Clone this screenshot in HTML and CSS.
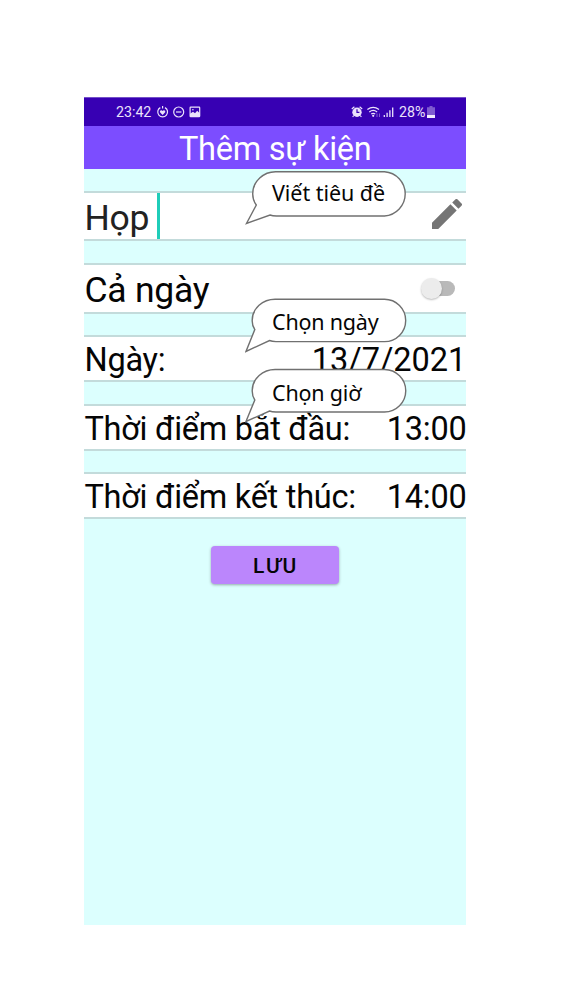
FILE: index.html
```html
<!DOCTYPE html>
<html lang="vi">
<head>
<meta charset="utf-8">
<title>Thêm sự kiện</title>
<link rel="stylesheet" href="styles.css">
</head>
<body>
<main class="phone">
  <div class="status">
    <span class="clock">23:42</span>
    <svg class="status-icons-left" width="46" height="14" viewBox="0 0 46 14" fill="none" stroke="#ebe2fb" stroke-width="1.2">
      <path d="M4.300 2.600A4.900 4.900 0 1 0 9 2.600M6.600 1.100v2.300"/>
      <path d="M6.600 10 4 7.300C3.400 5.400 5.600 4.700 6.600 6c1-1.300 3.200-.6 2.600 1.300Z" fill="#ebe2fb" stroke="none"/>
      <circle cx="22.700" cy="7" r="5"/><path d="M20 7h5.400"/>
      <rect x="34.100" y="2.100" width="9.600" height="9.600" rx=".6"/>
      <path d="M34 11V8.800l3-2 2 1.400 2.200-2.400L44 8.400V11Z" fill="#ebe2fb" stroke="none"/><circle cx="36.900" cy="4.700" r=".8" fill="#ebe2fb" stroke="none"/>
    </svg>
    <svg class="status-icons-right" width="46" height="14" viewBox="0 0 46 14" fill="none" stroke="#ebe2fb" stroke-width="1.2">
      <circle cx="6" cy="7.200" r="4.700" fill="#ebe2fb" stroke="none"/>
      <path d="M.8 4 3.400 1.800M8.600 1.800 11.200 4M2.800 10.500 1.600 12M9.200 10.500l1.200 1.500"/>
      <path d="M6 4.300v3.100h2.400" stroke="#3700b3"/>
      <path d="M16.400 4.600q5.800-4.400 11.600 0M18.300 6.900q3.900-3 7.800 0M20.200 9q2-1.400 4 0"/><circle cx="22.200" cy="10.800" r="1.100" fill="#ebe2fb" stroke="none"/>
      <path d="M26 12V8.500M28.500 8.500V12" stroke="#8b68d5" stroke-width=".9"/>
      <path d="M33.300 12v-2M36.100 12V7.800M38.900 12V5.200M41.700 12V2.400" stroke-width="1.300"/>
    </svg>
    <span class="battery-level">28%</span>
    <svg class="battery" width="8" height="12" viewBox="0 0 8 12"><path d="M2.500 0h3v1.200H8V12H0V1.200h2.500Z" fill="#7f5bd0"/><path d="M0 9h8V12H0Z" fill="#f3edff"/></svg>
  </div>
  <h1 class="title"><span>Thêm sự kiện</span></h1>
  <div class="row row-name">
    <span class="name">Họp</span><i class="caret"></i>
    <svg class="pencil" width="30" height="30" viewBox="3 3 18 18"><path fill="#757575" d="M3 17.250V21h3.750L17.810 9.940l-3.750-3.750L3 17.250zM20.710 7.040a1 1 0 0 0 0-1.410l-2.340-2.340a1 1 0 0 0-1.410 0l-1.830 1.830 3.750 3.750 1.830-1.830z"/></svg>
  </div>
  <div class="row row-allday">
    <span class="allday">Cả ngày</span>
    <span class="switch"><i class="thumb"></i></span>
  </div>
  <div class="row row-date"><span>Ngày:</span><span class="date">13/7/2021</span></div>
  <div class="row row-start"><span>Thời điểm bắt đầu:</span><span>13:00</span></div>
  <div class="row row-end"><span>Thời điểm kết thúc:</span><span>14:00</span></div>
  <button class="save">LƯU</button>
</main>
<div class="callout callout-title">
  <svg width="164" height="56" viewBox="0 0 164 56"><path d="M31 1.700H139A22.200 22.200 0 0 1 139 46H31Q27 46 24.500 45L1 53.500 10.800 35Q7.200 30 7.200 24A23 22.300 0 0 1 31 1.700Z"/></svg>
  <span>Viết tiêu đề</span>
</div>
<div class="callout callout-date">
  <svg width="164" height="56" viewBox="0 0 164 56"><path d="M31 1.200H139.500A21.200 21.200 0 0 1 139.500 43.600H31Q27 43.600 24.500 42.500L1 53.500 9.800 31.500Q7.200 28 7.200 23A23 21.300 0 0 1 31 1.200Z"/></svg>
  <span>Chọn ngày</span>
</div>
<div class="callout callout-time">
  <svg width="164" height="56" viewBox="0 0 164 56"><path d="M31 1.500H139.500A21.200 21.200 0 0 1 139.500 44H31Q27 44 24.500 43L1 53.500 9.800 32Q7.200 28 7.200 23A23 21.300 0 0 1 31 1.500Z"/></svg>
  <span>Chọn giờ</span>
</div>
</body>
</html>
```
FILE: styles.css
```css
* { box-sizing: border-box; }
body {
  margin: 0;
  padding: 97px 0 0 84px;
  width: 563px;
  height: 1001px;
  overflow: hidden;
  background: #fff;
  font-family: Roboto, sans-serif;
  color: #050505;
}
svg { display: block; flex: none; }
.phone {
  width: 382.4px;
  height: 828px;
  display: flex;
  flex-direction: column;
  background: #dcfffe;
}
.status {
  height: 29px;
  flex: none;
  display: flex;
  align-items: center;
  padding-left: 32px;
  background: #3700b3;
  border-top: 1px solid #7450c9;
  color: #ebe2fb;
  font-size: 14.2px;
}
.clock { width: 39.5px; }
.status-icons-right { margin-left: 149.5px; }
.battery-level { width: 29px; margin-left: 2px; white-space: nowrap; }
.battery { margin-left: -1px; }
.title {
  margin: 0;
  height: 43px;
  flex: none;
  background: #7c4dff;
  color: #fff;
  font-size: 32.5px;
  font-weight: 400;
  line-height: 46px;
  text-align: center;
  letter-spacing: -.25px;
}
.row {
  flex: none;
  display: flex;
  align-items: center;
  justify-content: space-between;
  padding-left: .5px;
  background: #fff;
  border: solid #c3dbdb;
  border-width: 2px 0;
  font-size: 32.5px;
  letter-spacing: -.27px;
  white-space: nowrap;
}
.row-name { height: 50px; margin-top: 22px; justify-content: flex-start; padding-right: 4.5px; }
.row-allday { height: 51px; margin-top: 22px; padding-right: 11.5px; }
.row-date { height: 47px; margin-top: 21px; padding-top: 2px; }
.row-start { height: 47px; margin-top: 22px; padding-top: 2px; }
.row-end { height: 47px; margin-top: 21px; padding-top: 2px; }
.date { letter-spacing: 0; }
.name { width: 72.5px; color: #222; font-size: 35.5px; padding-top: 4px; }
.caret { width: 2.5px; height: 46px; background: #1fcdb9; }
.pencil { margin-left: auto; margin-bottom: 4px; }
.allday { font-size: 35.5px; padding-top: 3px; }
.switch {
  position: relative;
  width: 27px;
  height: 15px;
  border-radius: 8px;
  background: #b9b9b9;
}
.thumb {
  position: absolute;
  left: -7px;
  top: -3px;
  width: 21px;
  height: 21px;
  border-radius: 50%;
  background: #ececec;
  box-shadow: 0 1px 2px #0004;
}
.save {
  width: 128px;
  height: 38px;
  margin: 27.4px 0 0 127.4px;
  padding: 2px 0 0;
  border: 0;
  border-radius: 4px;
  background: #bb86fc;
  box-shadow: 0 1px 3px #0005;
  color: #050505;
  font: 500 21px Roboto, sans-serif;
  letter-spacing: 1.7px;
}
.callout { position: absolute; left: 245px; width: 164px; height: 56px; }
.callout path { fill: #fff; stroke: #707070; stroke-width: 1.4; }
.callout span {
  position: absolute;
  left: 27px;
  top: 9px;
  font: 21.5px/30px "Noto Sans", sans-serif;
  letter-spacing: -.2px;
  white-space: nowrap;
}
.callout-title { top: 170px; }
.callout-title svg { width: 165px; }
.callout-title span { top: 8px; letter-spacing: -.05px; }
.callout-date { top: 298px; }
.callout-time { top: 368px; }
.callout-time span { top: 10px; }
```
